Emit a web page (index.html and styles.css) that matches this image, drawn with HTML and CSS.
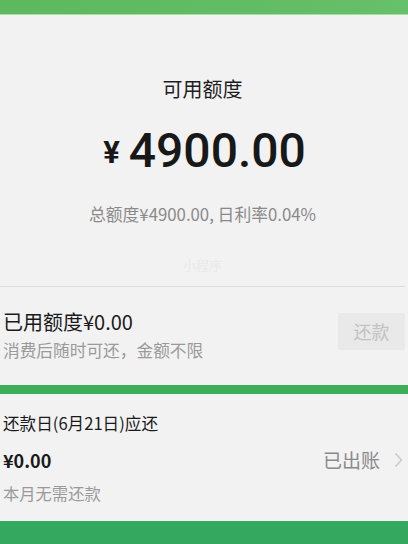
FILE: index.html
```html
<!DOCTYPE html>
<html lang="zh">
<head>
<meta charset="utf-8">
<link rel="stylesheet" href="styles.css">
</head>
<body>
<div class="page">
  <div class="topbar"></div>
  <section class="summary">
    <div class="label">可用额度</div>
    <div class="amount"><span class="yen">¥</span><span class="num">4900.00</span></div>
    <div class="sub">总额度¥4900.00, 日利率0.04%</div>
    <div class="mark">小程序</div>
  </section>
  <section class="used">
    <div class="used-text">
      <div class="used-title">已用额度¥0.00</div>
      <div class="used-desc">消费后随时可还，金额不限</div>
    </div>
    <div class="repay-btn">还款</div>
  </section>
  <div class="green-sep"></div>
  <section class="bill">
    <div class="bill-title">还款日(6月21日)应还</div>
    <div class="bill-row">
      <div class="bill-amt">¥0.00</div>
      <div class="bill-status">已出账<svg class="chev" width="9" height="16" viewBox="0 0 9 16"><path d="M1.5 1.5 L7.5 8 L1.5 14.5" fill="none" stroke="#c8c8c8" stroke-width="1.4"/></svg></div>
    </div>
    <div class="bill-desc">本月无需还款</div>
  </section>
  <div class="footer"></div>
</div>
</body>
</html>
```
FILE: styles.css
```css
html, body {
  margin: 0;
  padding: 0;
  background: #f2f2f2;
}
body {
  font-family: "Noto Sans CJK SC", "Noto Sans", sans-serif;
  color: #1a1a1a;
}
.page {
  width: 408px;
  height: 544px;
  display: flex;
  flex-direction: column;
  overflow: hidden;
}
.topbar {
  height: 14px;
  background: linear-gradient(90deg, #5db85e 0%, #62bc63 60%, #67c06a 100%);
  border-bottom: 1px solid #a9dca9;
  flex: none;
}
.summary {
  height: 272px;
  border-bottom: 1px solid #dcdcdc;
  margin-right: 3px;
  display: flex;
  flex-direction: column;
  align-items: center;
  flex: none;
  box-sizing: border-box;
}
.label {
  margin-top: 61px;
  font-size: 20px;
  line-height: 26px;
  color: #1e1e1e;
}
.amount {
  margin-top: 20px;
  display: flex;
  align-items: baseline;
  color: #181818;
  margin-left: 4px;
}
.yen {
  font-family: Roboto, sans-serif;
  font-size: 31px;
  font-weight: 700;
  margin-right: 9px;
  position: relative;
  top: -4px;
}
.num {
  font-family: Roboto, sans-serif;
  font-size: 48px;
  line-height: 58px;
  font-weight: 500;
}
.sub {
  margin-top: 23px;
  font-size: 16.8px;
  line-height: 22px;
  color: #8a8a8a;
}
.mark {
  margin-top: 30px;
  font-size: 13px;
  color: #e9e9e9;
}
.used {
  display: flex;
  justify-content: space-between;
  align-items: center;
  padding: 21px 3px 0 3px;
  height: 98px;
  box-sizing: border-box;
  flex: none;
}
.used-text {
  display: flex;
  flex-direction: column;
  align-self: flex-start;
}
.used-title {
  font-size: 20px;
  line-height: 27px;
  color: #1a1a1a;
}
.used-desc {
  margin-top: 4px;
  font-size: 16.7px;
  line-height: 22px;
  color: #9a9a9a;
}
.repay-btn {
  width: 67px;
  height: 37px;
  background: #e9e9e9;
  color: #c2c2c2;
  font-size: 18px;
  line-height: 37px;
  text-align: center;
  align-self: flex-start;
  margin-top: 5px;
  border-radius: 2px;
}
.green-sep {
  height: 9px;
  background: #3fae5a;
  flex: none;
}
.bill {
  padding: 18px 3px 0 3px;
  height: 127px;
  box-sizing: border-box;
  flex: none;
}
.bill-title {
  font-size: 16.6px;
  line-height: 22px;
  color: #1a1a1a;
}
.bill-row {
  margin-top: 14px;
  display: flex;
  justify-content: space-between;
  align-items: center;
}
.bill-amt {
  font-size: 18px;
  font-weight: 700;
  line-height: 24px;
}
.bill-status {
  font-size: 19px;
  line-height: 24px;
  color: #8a8a8a;
  display: flex;
  align-items: center;
}
.chev {
  margin-left: 14px;
  margin-right: 2px;
}
.bill-desc {
  margin-top: 10px;
  font-size: 16.3px;
  line-height: 22px;
  color: #9a9a9a;
}
.footer {
  flex: 1;
  background: #34a85e;
}
```
